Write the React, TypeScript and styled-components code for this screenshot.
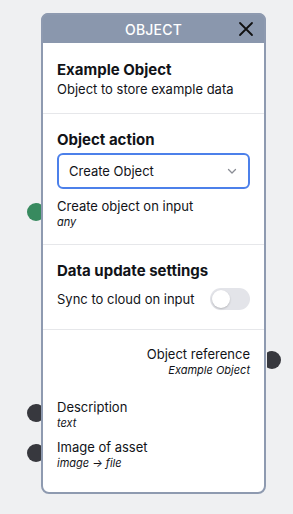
import styled, { createGlobalStyle } from 'styled-components';

const Global = createGlobalStyle`
  body {
    margin: 0;
    background: #eff0f2;
    font-family: Inter, 'Noto Sans', sans-serif;
    color: #111318;
  }
`;

const Canvas = styled.div`
  padding: 13px 0 0 41px;
  height: 514px;
  box-sizing: border-box;
`;

const Card = styled.div`
  width: 225px;
  height: 481px;
  box-sizing: border-box;
  border: 2px solid #8e9ab0;
  border-radius: 8px;
  background: #fff;
  display: flex;
  flex-direction: column;
`;

const Header = styled.div`
  height: 28px;
  margin: -2px -2px 0;
  border-radius: 7px 7px 0 0;
  background: #8a97ad;
  border: 2px solid #8e9ab0;
  border-bottom: none;
  display: flex;
  align-items: center;
  justify-content: center;
  position: relative;
  color: #fff;
  font-size: 14px;
  font-weight: 500;
  letter-spacing: 0.2px;
`;

const Close = styled.button`
  position: absolute;
  right: 8px;
  top: 4px;
  width: 20px;
  height: 20px;
  padding: 0;
  border: none;
  background: none;
  display: flex;
  align-items: center;
  justify-content: center;
`;

const Section = styled.div<{ $pt: number; $pb: number; $last?: boolean }>`
  padding: ${({ $pt, $pb }) => `${$pt}px 14px ${$pb}px`};
  border-bottom: ${({ $last }) => ($last ? 'none' : '1px solid #e6e7ea')};
  display: flex;
  flex-direction: column;
`;

const Title = styled.div`
  font-size: 15px;
  line-height: 20px;
  font-weight: 700;
`;

const Text = styled.div`
  font-size: 13px;
  line-height: 18px;
`;

const Type = styled.div`
  font-size: 11px;
  line-height: 14px;
  font-style: italic;
`;

const Select = styled.div`
  margin-top: 3px;
  height: 36px;
  box-sizing: border-box;
  border: 2px solid #4c80ea;
  border-radius: 6px;
  display: flex;
  align-items: center;
  justify-content: space-between;
  padding: 0 10px 0 10px;
  font-size: 13px;
`;

const Port = styled.div<{ $align?: 'left' | 'right'; $mt: number }>`
  position: relative;
  margin-top: ${({ $mt }) => $mt}px;
  text-align: ${({ $align }) => $align || 'left'};
`;

// connection dot that tucks in under the card edge
const Handle = styled.span<{ $side: 'left' | 'right'; $color: string }>`
  position: absolute;
  top: 6px;
  ${({ $side }) =>
    $side === 'left'
      ? 'left: -30px; clip-path: inset(0 4px 0 0);'
      : 'right: -31px; clip-path: inset(0 0 0 4px);'}
  width: 18px;
  height: 18px;
  border-radius: 50%;
  background: ${({ $color }) => $color};
`;

const Row = styled.div`
  margin-top: 7px;
  display: flex;
  align-items: center;
  justify-content: space-between;
`;

const Toggle = styled.div`
  width: 40px;
  height: 22px;
  border-radius: 11px;
  background: #e3e4e9;
  padding: 2px;
  box-sizing: border-box;

  &::before {
    content: '';
    display: block;
    width: 18px;
    height: 18px;
    border-radius: 50%;
    background: #fff;
    box-shadow: 0 1px 2px rgba(0, 0, 0, 0.2);
  }
`;

export default function App() {
  return (
    <>
      <Global />
      <Canvas>
        <Card>
          <Header>
            OBJECT
            <Close aria-label="close">
              <svg width="16" height="16" viewBox="0 0 16 16">
                <path d="M2 2 L14 14 M14 2 L2 14" stroke="#111" strokeWidth="1.8" strokeLinecap="round" />
              </svg>
            </Close>
          </Header>

          <Section $pt={17} $pb={15}>
            <Title>Example Object</Title>
            <Text>Object to store example data</Text>
          </Section>

          <Section $pt={16} $pb={15}>
            <Title>Object action</Title>
            <Select>
              <span>Create Object</span>
              <svg width="12" height="12" viewBox="0 0 12 12">
                <path d="M2.5 4.5 L6 8 L9.5 4.5" fill="none" stroke="#8a8d95" strokeWidth="1.3" strokeLinecap="round" strokeLinejoin="round" />
              </svg>
            </Select>
            <Port $mt={8}>
              <Handle $side="left" $color="#388a5f" />
              <Text>Create object on input</Text>
              <Type>any</Type>
            </Port>
          </Section>

          <Section $pt={16} $pb={19}>
            <Title>Data update settings</Title>
            <Row>
              <Text>Sync to cloud on input</Text>
              <Toggle />
            </Row>
          </Section>

          <Section $pt={15} $pb={0} $last>
            <Port $align="right" $mt={0}>
              <Handle $side="right" $color="#37383e" />
              <Text>Object reference</Text>
              <Type>Example Object</Type>
            </Port>
            <Port $mt={21}>
              <Handle $side="left" $color="#37383e" />
              <Text>Description</Text>
              <Type>text</Type>
            </Port>
            <Port $mt={8}>
              <Handle $side="left" $color="#37383e" />
              <Text>Image of asset</Text>
              <Type>image → file</Type>
            </Port>
          </Section>
        </Card>
      </Canvas>
    </>
  );
}
